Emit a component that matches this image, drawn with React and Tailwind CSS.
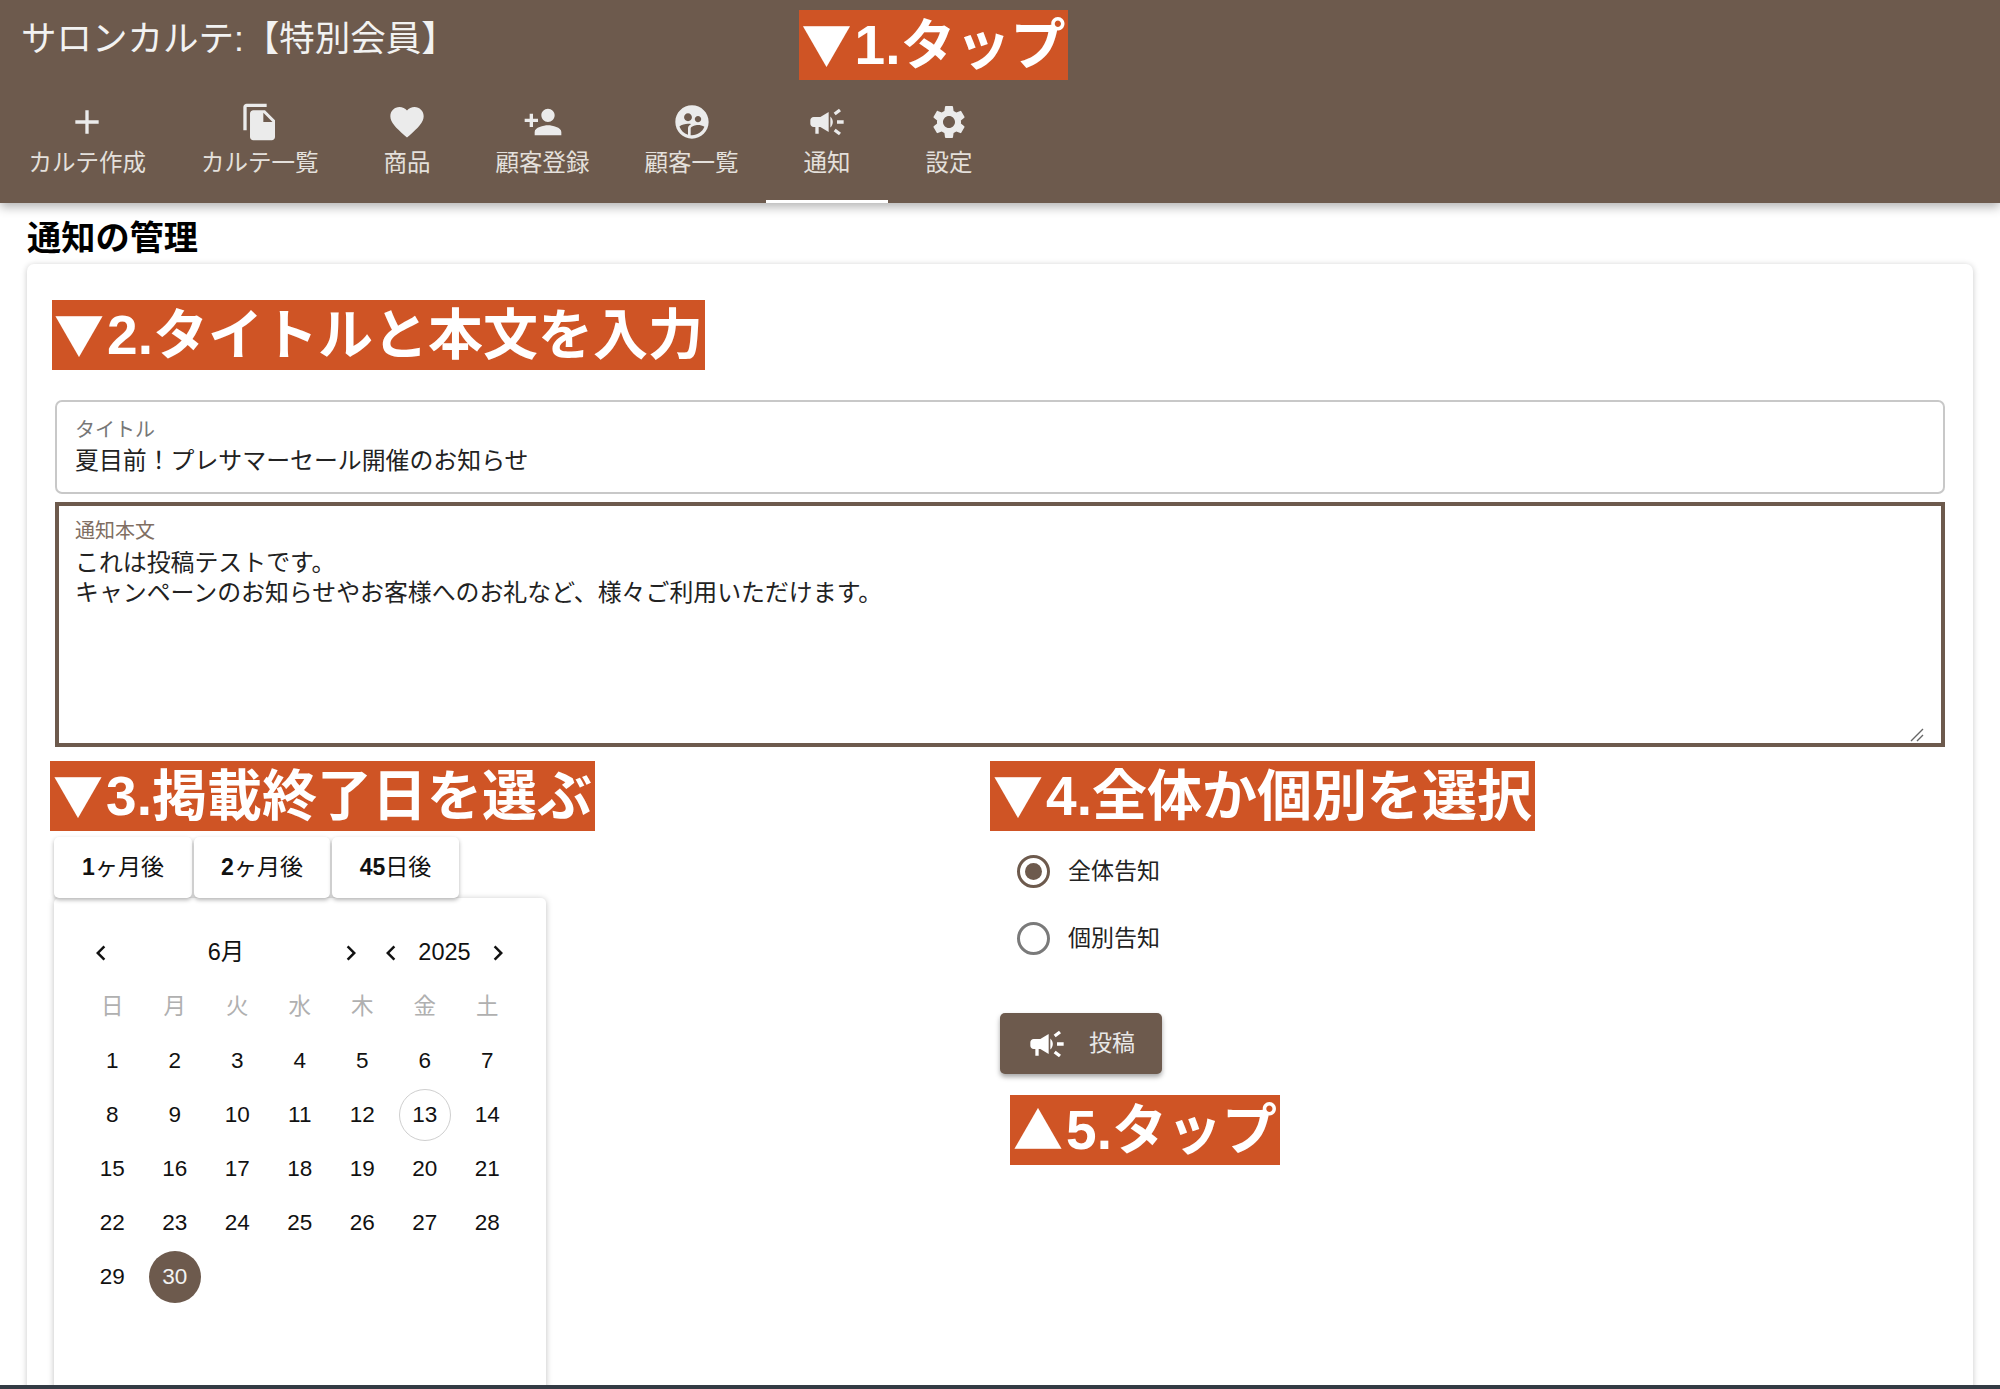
import React from "react";
import {
  MdAdd,
  MdFileCopy,
  MdFavorite,
  MdPersonAdd,
  MdSupervisedUserCircle,
  MdCampaign,
  MdSettings,
  MdChevronLeft,
  MdChevronRight,
} from "react-icons/md";

const tabs = [
  { label: "カルテ作成", icon: MdAdd },
  { label: "カルテ一覧", icon: MdFileCopy },
  { label: "商品", icon: MdFavorite },
  { label: "顧客登録", icon: MdPersonAdd },
  { label: "顧客一覧", icon: MdSupervisedUserCircle },
  { label: "通知", icon: MdCampaign, active: true },
  { label: "設定", icon: MdSettings },
];

const weekdays = ["日", "月", "火", "水", "木", "金", "土"];
const days = Array.from({ length: 30 }, (_, i) => i + 1);

const Callout = ({ className, mark = "▼", children }) => (
  <div
    className={`h-[70px] flex items-center justify-center bg-[#cf5425] text-white font-bold text-[55px] leading-none whitespace-nowrap ${className}`}
  >
    <span className="-translate-y-[3px] mr-[3px] text-[50px] font-['Noto_Sans_CJK_JP',sans-serif]">{mark}</span>
    {children}
  </div>
);

const Preset = ({ num, rest, className }) => (
  <button
    className={`h-[61px] bg-white rounded-[5px] text-[23px] text-[#111] shadow-[0_2px_4px_rgba(0,0,0,0.3)] ${className}`}
  >
    <b>{num}</b>
    {rest}
  </button>
);

const Radio = ({ checked, label }) => (
  <div className="h-[67px] flex items-center ml-[27px]">
    <span
      className={`w-[33px] h-[33px] rounded-full border-[3px] flex items-center justify-center ${
        checked ? "border-[#6d5a4d]" : "border-[#7a7a7a]"
      }`}
    >
      {checked && <span className="w-[17px] h-[17px] rounded-full bg-[#6d5a4d]" />}
    </span>
    <span className="ml-[18px] text-[23px] text-[#222]">{label}</span>
  </div>
);

const App = () => {
  return (
    <div className="w-full h-[1389px] flex flex-col overflow-hidden bg-white font-['Liberation_Sans','Noto_Sans_CJK_JP',sans-serif]">
      <header className="relative z-10 h-[203px] shrink-0 bg-[#6d5a4d] shadow-[0_4px_10px_rgba(0,0,0,0.3)]">
        <div className="h-[80px] flex items-center pl-[21px] text-[35.5px] text-[#f2f2f2]">
          サロンカルテ:【特別会員】
        </div>
        <nav className="flex pl-px h-[123px]">
          {tabs.map((tab) => {
            const Icon = tab.icon;
            return (
              <div
                key={tab.label}
                className={`min-w-[122px] px-[27.5px] pt-[22px] flex flex-col items-center text-[23.5px] leading-[30px] text-[#e4e0dc] ${
                  tab.active ? "border-b-[3px] border-white" : ""
                }`}
              >
                <Icon size={40} className="text-[#ebebeb] mb-[6px]" />
                <span>{tab.label}</span>
              </div>
            );
          })}
        </nav>
        <Callout className="absolute left-[799px] top-[10px] w-[269px]">1.タップ</Callout>
      </header>

      <main className="flex-1 min-h-0 px-[27px] overflow-hidden">
        <h1 className="pt-[15px] pb-[6px] text-[34.2px] leading-[40px] font-bold text-black">通知の管理</h1>
        <div className="h-[1200px] rounded-[7px] bg-white px-[28px] pt-[36px] shadow-[0_1px_6px_rgba(0,0,0,0.22)]">
          <Callout className="w-[653px] -ml-[3px]">2.タイトルと本文を入力</Callout>

          <div className="mt-[30px] h-[94px] rounded-[7px] border-2 border-[#c8c8c8] pl-[18px] pt-[14px]">
            <label className="block text-[20px] leading-[28px] text-[#777]">タイトル</label>
            <input
              readOnly
              value="夏目前！プレサマーセール開催のお知らせ"
              className="w-[1800px] mt-px text-[23.9px] leading-[32px] text-[#222] outline-none"
            />
          </div>

          <div className="relative mt-[8px] h-[245px] border-4 border-[#6d5a4d] pl-[16px] pt-[11px]">
            <label className="block text-[20px] leading-[28px] text-[#806e62]">通知本文</label>
            <textarea
              readOnly
              value={"これは投稿テストです。\nキャンペーンのお知らせやお客様へのお礼など、様々ご利用いただけます。"}
              className="block w-[1850px] h-[190px] mt-[3px] resize-none text-[23.9px] leading-[30px] text-[#222] outline-none"
            />
            <svg
              className="absolute right-[17px] bottom-px w-[14px] h-[14px]"
              viewBox="0 0 14 14"
              fill="none"
              stroke="#666"
              strokeWidth="1.4"
            >
              <path d="M1 13L13 1M7 13L13 7" />
            </svg>
          </div>

          <div className="flex mt-[14px]">
            <div className="w-[935px] shrink-0">
              <Callout className="w-[545px] -ml-[5px]">3.掲載終了日を選ぶ</Callout>
              <div className="flex gap-[2px] mt-[6px] -ml-px">
                <Preset num="1" rest="ヶ月後" className="w-[138px]" />
                <Preset num="2" rest="ヶ月後" className="w-[136px]" />
                <Preset num="45" rest="日後" className="w-[127px]" />
              </div>
              <div className="w-[492px] h-[600px] -ml-px pl-[27px] pt-[35px] rounded-[5px] bg-white shadow-[0_1px_6px_rgba(0,0,0,0.25)] text-[22.5px] text-[#111]">
                <div className="flex h-[40px] items-center">
                  <div className="w-[290px] flex items-center justify-between">
                    <MdChevronLeft size={30} className="mx-[5px] text-[#111]" />
                    <span className="text-[23.5px]">6月</span>
                    <MdChevronRight size={30} className="mx-[5px] text-[#111]" />
                  </div>
                  <div className="w-[147px] flex items-center justify-between">
                    <MdChevronLeft size={30} className="mx-[5px] text-[#111]" />
                    <span className="text-[23.5px]">2025</span>
                    <MdChevronRight size={30} className="mx-[5px] text-[#111]" />
                  </div>
                </div>
                <div className="grid grid-cols-[repeat(7,62.5px)] mt-[7px]">
                  {weekdays.map((d) => (
                    <div key={d} className="h-[54px] flex items-center justify-center text-[#b0b0b0]">
                      {d}
                    </div>
                  ))}
                  {days.map((d) => (
                    <div key={d} className="h-[54px] flex items-center justify-center">
                      <span
                        className={`w-[52px] h-[52px] rounded-full flex items-center justify-center ${
                          d === 13 ? "border border-[#cfcfcf]" : ""
                        } ${d === 30 ? "bg-[#6d5a4d] text-[#f2f2f2]" : ""}`}
                      >
                        {d}
                      </span>
                    </div>
                  ))}
                </div>
              </div>
            </div>

            <div>
              <Callout className="w-[545px]">4.全体か個別を選択</Callout>
              <div className="mt-[7px]">
                <Radio checked label="全体告知" />
                <Radio label="個別告知" />
              </div>
              <button className="mt-[41px] ml-[10px] w-[162px] h-[61px] flex items-center pl-[27px] rounded-[5px] bg-[#6d5a4d] text-[23px] text-[#e8e8e8] shadow-[0_3px_5px_rgba(0,0,0,0.35)]">
                <MdCampaign size={40} className="text-white" />
                <span className="ml-[22px]">投稿</span>
              </button>
              <Callout mark="▲" className="mt-[21px] ml-[20px] w-[270px]">5.タップ</Callout>
            </div>
          </div>
        </div>
      </main>

      <div className="h-[4px] shrink-0 bg-[#333b44]" />
    </div>
  );
};

export default App;
